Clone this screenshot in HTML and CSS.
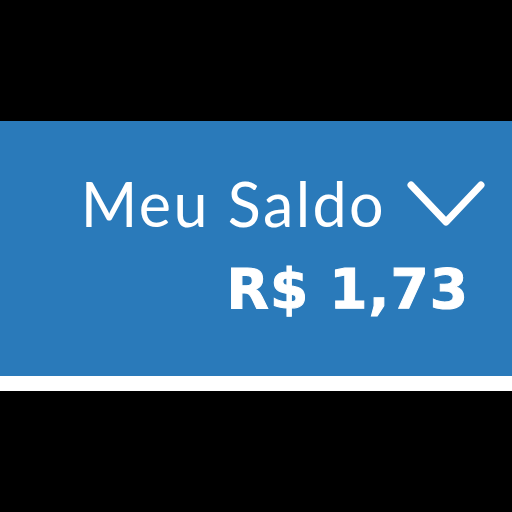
FILE: index.html
```html
<!DOCTYPE html>
<html>
<head>
<meta charset="utf-8">
<link rel="stylesheet" href="styles.css">
</head>
<body>
<div class="top"></div>
<div class="band">
  <div class="title-row">
    <span class="title">Meu Saldo</span>
    <svg class="chevron" width="78" height="46" viewBox="0 0 78 46">
      <path d="M4 4 L39 41 L74 4" fill="none" stroke="#fff" stroke-width="7" stroke-linecap="round" stroke-linejoin="round"/>
    </svg>
  </div>
  <div class="amount">R$ 1,73</div>
</div>
<div class="stripe"></div>
</body>
</html>
```
FILE: styles.css
```css
html, body {
  margin: 0;
  padding: 0;
  background: #000;
  height: 100%;
}
.top {
  height: 121px;
}
.band {
  height: 255px;
  background: #2a7aba;
  box-sizing: border-box;
  display: flex;
  flex-direction: column;
  align-items: flex-end;
  padding: 48px 27px 0 0;
  font-family: Lato, "Liberation Sans", sans-serif;
  color: #fff;
}
.title-row {
  display: flex;
  align-items: center;
  gap: 21px;
}
.title {
  font-size: 61px;
  font-weight: 400;
  line-height: 70px;
  letter-spacing: 2.4px;
}
.chevron {
  display: block;
}
.amount {
  font-family: "DejaVu Sans", sans-serif;
  font-size: 55px;
  font-weight: 700;
  line-height: 60px;
  letter-spacing: 1px;
  -webkit-text-stroke: 1px #fff;
  margin: 20px 16px 0 0;
}
.stripe {
  height: 15px;
  background: #fff;
}
```
